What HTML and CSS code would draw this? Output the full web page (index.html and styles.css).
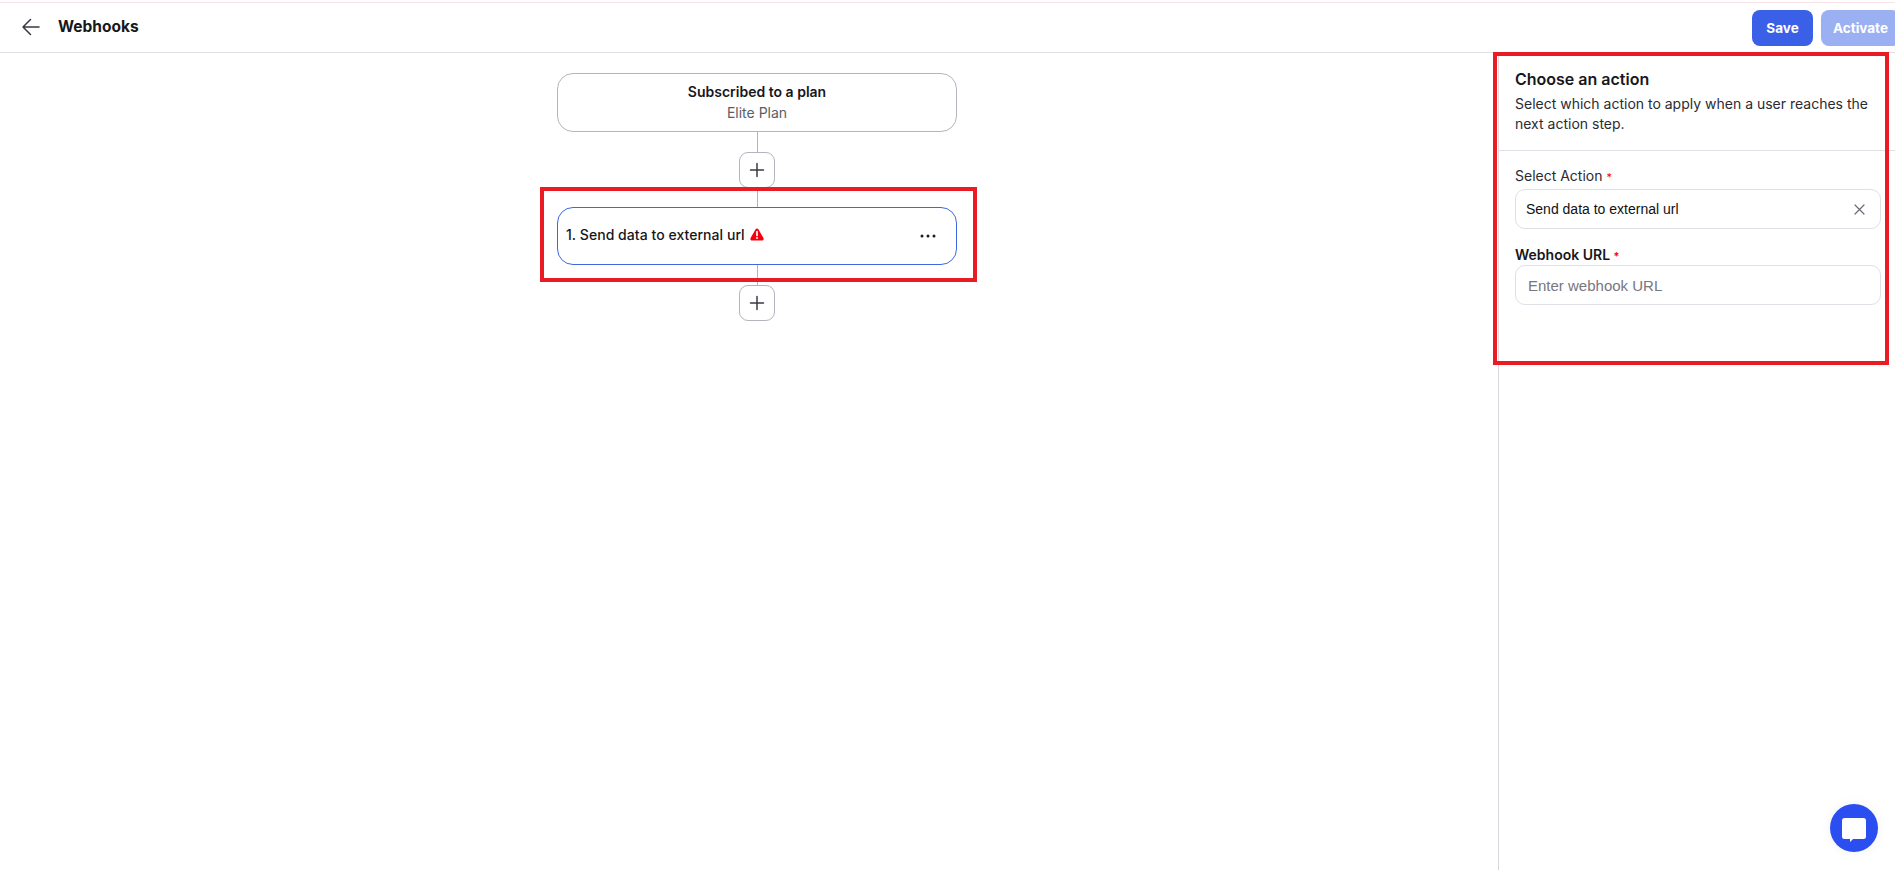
FILE: index.html
```html
<!DOCTYPE html>
<html lang="en">
<head>
<meta charset="utf-8">
<title>Webhooks</title>
<link rel="stylesheet" href="styles.css">
</head>
<body>
<div class="app">
  <header class="topbar">
    <div class="topbar-left">
      <svg class="back" width="20" height="18" viewBox="0 0 20 18" fill="none" stroke="#3a3a42" stroke-width="1.5" stroke-linecap="round" stroke-linejoin="round"><path d="M18 9H2M9.500 1.500 2 9l7.500 7.500"/></svg>
      <h1 class="page-title">Webhooks</h1>
    </div>
    <div class="topbar-actions">
      <button class="btn btn-save">Save</button>
      <button class="btn btn-activate">Activate</button>
    </div>
  </header>
  <div class="workspace">
    <main class="canvas">
      <div class="node">
        <div class="node-title">Subscribed to a plan</div>
        <div class="node-sub">Elite Plan</div>
      </div>
      <div class="line line-a"></div>
      <button class="plus"><svg width="16" height="16" viewBox="0 0 16 16" stroke="#3a3a42" stroke-width="1.500" stroke-linecap="round"><path d="M8 1.500v13M1.500 8h13"/></svg></button>
      <div class="line line-b"></div>
      <div class="node node-active">
        <div class="node-label">1. Send data to external url
          <svg class="warn" width="14" height="13" viewBox="0 0 14 13"><path d="M7 .5c.6 0 1.100.3 1.400.8l5 8.700c.7 1.200-.1 2.500-1.400 2.500H2C.7 12.500-.1 11.200.6 10l5-8.700C5.900.8 6.400.5 7 .5z" fill="#f5000b"/><path d="M7 3.500v4" stroke="#fff" stroke-width="1.700" stroke-linecap="round"/><circle cx="7" cy="10" r="1" fill="#fff"/></svg>
        </div>
        <svg class="more" width="16" height="4" viewBox="0 0 16 4" fill="#1b1b22"><circle cx="2" cy="2" r="1.500"/><circle cx="8" cy="2" r="1.500"/><circle cx="14" cy="2" r="1.500"/></svg>
      </div>
      <div class="line line-c"></div>
      <button class="plus"><svg width="16" height="16" viewBox="0 0 16 16" stroke="#3a3a42" stroke-width="1.500" stroke-linecap="round"><path d="M8 1.500v13M1.500 8h13"/></svg></button>
    </main>
    <aside class="panel">
      <div class="panel-head">
        <h2 class="panel-title">Choose an action</h2>
        <p class="panel-desc">Select which action to apply when a user reaches the next action step.</p>
      </div>
      <div class="panel-body">
        <label class="field-label">Select Action <span class="req">*</span></label>
        <div class="input input-select">
          <span class="input-value">Send data to external url</span>
          <svg width="11" height="11" viewBox="0 0 11 11" stroke="#6a6a72" stroke-width="1.200" stroke-linecap="round"><path d="M1 1l9 9M10 1l-9 9"/></svg>
        </div>
        <label class="field-label field-label-strong">Webhook URL <span class="req">*</span></label>
        <div class="input input-text"><span class="placeholder">Enter webhook URL</span></div>
      </div>
    </aside>
  </div>
</div>
<div class="mark mark-node"></div>
<div class="mark mark-panel"></div>
<button class="chat"><svg width="24" height="24" viewBox="0 0 24 24" fill="#fff"><path d="M2.500 0h19A2.500 2.500 0 0 1 24 2.500v16a2.500 2.500 0 0 1-2.500 2.500H11l-3 3v-3H2.500A2.500 2.500 0 0 1 0 18.500v-16A2.500 2.500 0 0 1 2.500 0z"/></svg></button>
</body>
</html>
```
FILE: styles.css
```css
* { box-sizing: border-box; }
html, body { margin: 0; height: 100%; overflow: hidden; }
body { background: #fff; font-family: Inter, "Liberation Sans", sans-serif; color: #17171c; }
h1, h2, p { margin: 0; }
button { font-family: inherit; padding: 0; cursor: pointer; }
.app { height: 870px; display: flex; flex-direction: column; padding-top: 2px; }
.topbar { height: 51px; flex: none; display: flex; align-items: center; justify-content: space-between; border-top: 1px solid #f8e3e8; border-bottom: 1px solid #e0dfe5; padding-left: 21px; }
.topbar-left { display: flex; align-items: center; gap: 17px; margin-top: -2px; }
.page-title { font-size: 15.5px; font-weight: 700; line-height: 20px; }
.topbar-actions { display: flex; gap: 8px; margin-right: -5px; margin-top: 1px; }
.btn { height: 36px; border: 0; border-radius: 8px; color: #fff; font-size: 13.5px; font-weight: 700; }
.btn-save { width: 61px; background: #3a60e8; }
.btn-activate { width: 79px; background: #9bb0f2; }
.workspace { flex: 1; display: flex; min-height: 0; }
.canvas { width: 1498px; padding: 20px 0 0 16px; display: flex; flex-direction: column; align-items: center; }
.node { width: 400px; height: 59px; border: 1px solid #b5b4be; border-radius: 16px; display: flex; flex-direction: column; align-items: center; justify-content: center; flex: none; }
.node-title { font-size: 14px; font-weight: 600; line-height: 20px; }
.node-sub { font-size: 14px; line-height: 21px; color: #5d5d66; }
.node-active { height: 58px; border-color: #3f68e0; flex-direction: row; justify-content: space-between; padding: 0 20px 0 8px; }
.node-label { font-size: 14px; font-weight: 500; line-height: 20px; display: flex; align-items: center; gap: 5px; margin-top: -3px; letter-spacing: .05px; }
.warn { flex: none; }
.more { flex: none; }
.line { width: 1px; background: #b5b4be; flex: none; }
.line-a { height: 20px; }
.line-b { height: 19px; }
.line-c { height: 20px; }
.plus { width: 36px; height: 36px; flex: none; background: #fff; border: 1px solid #b5b4be; border-radius: 9px; display: flex; align-items: center; justify-content: center; }
.panel { width: 397px; border-left: 1px solid #d9d8de; }
.panel-head { height: 98px; padding: 16px 16px 0 16px; border-bottom: 1px solid #e0dfe5; }
.panel-title { font-size: 16px; font-weight: 600; line-height: 20px; }
.panel-desc { font-size: 14px; line-height: 20px; margin-top: 5px; color: #2b2b33; width: 366px; }
.panel-body { padding: 15px 14px 0 16px; }
.field-label { display: block; font-size: 14px; line-height: 20px; color: #2b2b33; }
.field-label-strong { font-weight: 600; color: #17171c; margin-top: 16px; }
.req { color: #f5000b; font-size: 11px; line-height: 1; }
.input { height: 40px; margin-top: 3px; border: 1px solid #e0dfe5; border-radius: 10px; display: flex; align-items: center; font-family: "Liberation Sans", Arial, sans-serif; font-size: 14px; }
.input-select { justify-content: space-between; padding: 0 15px 0 10px; color: #111; }
.input-text { padding: 0 12px; margin-top: 0; font-size: 15px; }
.placeholder { color: #777780; }
.mark { position: absolute; border: 4px solid #e91c23; pointer-events: none; }
.mark-node { left: 540px; top: 187px; width: 437px; height: 95px; }
.mark-panel { left: 1493px; top: 52px; width: 396px; height: 313px; }
.chat { position: absolute; left: 1830px; top: 804px; width: 48px; height: 48px; border: 0; border-radius: 50%; background: #2a4ef0; display: flex; align-items: center; justify-content: center; padding-top: 3px; box-shadow: 0 0 12px rgba(0,0,0,.06); }
```
